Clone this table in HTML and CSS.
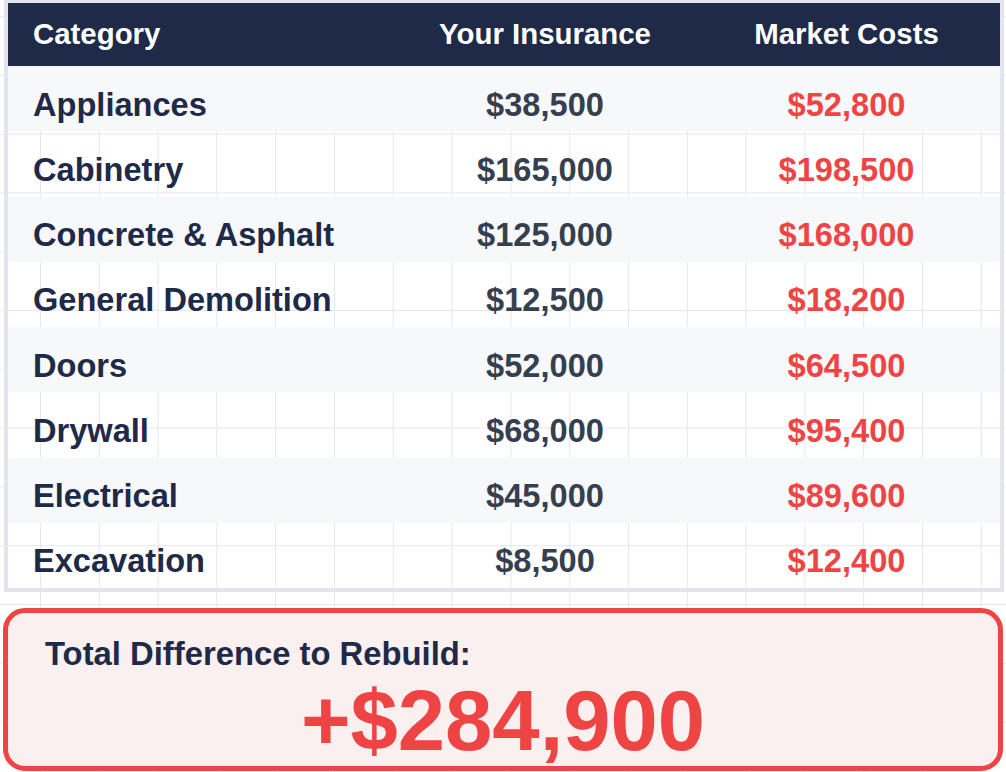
FILE: index.html
```html
<!DOCTYPE html>
<html lang="en">
<head>
<meta charset="utf-8">
<title>Insurance vs Market Costs</title>
<link rel="stylesheet" href="styles.css">
</head>
<body>
  <div class="table">
    <div class="row head">
      <div class="cell cat">Category</div>
      <div class="cell">Your Insurance</div>
      <div class="cell">Market Costs</div>
    </div>
    <div class="row shaded">
      <div class="cell cat">Appliances</div>
      <div class="cell ins">$38,500</div>
      <div class="cell mkt">$52,800</div>
    </div>
    <div class="row">
      <div class="cell cat">Cabinetry</div>
      <div class="cell ins">$165,000</div>
      <div class="cell mkt">$198,500</div>
    </div>
    <div class="row shaded">
      <div class="cell cat">Concrete &amp; Asphalt</div>
      <div class="cell ins">$125,000</div>
      <div class="cell mkt">$168,000</div>
    </div>
    <div class="row">
      <div class="cell cat">General Demolition</div>
      <div class="cell ins">$12,500</div>
      <div class="cell mkt">$18,200</div>
    </div>
    <div class="row shaded">
      <div class="cell cat">Doors</div>
      <div class="cell ins">$52,000</div>
      <div class="cell mkt">$64,500</div>
    </div>
    <div class="row">
      <div class="cell cat">Drywall</div>
      <div class="cell ins">$68,000</div>
      <div class="cell mkt">$95,400</div>
    </div>
    <div class="row shaded">
      <div class="cell cat">Electrical</div>
      <div class="cell ins">$45,000</div>
      <div class="cell mkt">$89,600</div>
    </div>
    <div class="row">
      <div class="cell cat">Excavation</div>
      <div class="cell ins">$8,500</div>
      <div class="cell mkt">$12,400</div>
    </div>
  </div>

  <div class="total">
    <div class="total-label">Total Difference to Rebuild:</div>
    <div class="total-value">+$284,900</div>
  </div>
</body>
</html>
```

FILE: styles.css
```css
html, body {
  margin: 0;
  padding: 0;
}

body {
  width: 1006px;
  min-height: 772px;
  overflow: hidden;
  font-family: "Liberation Sans", Arial, sans-serif;
  font-weight: 700;
  background-color: #ffffff;
  background-image:
    linear-gradient(to right, #e6e7ed 1px, transparent 1px),
    linear-gradient(to bottom, #e6e7ed 1px, transparent 1px);
  background-size: 58.8px 58.8px;
  background-position: 40px 16px;
}

.table {
  box-sizing: border-box;
  width: 1000px;
  margin-left: 4px;
  border: 4px solid #e4e5ec;
  border-top-width: 3px;
}

.row {
  box-sizing: border-box;
  display: grid;
  grid-template-columns: 389px 296px 1fr;
  align-items: center;
  height: 65.25px;
  padding-top: 12px;
  font-size: 32.6px;
}

.row.shaded {
  background: #f7f8fa;
}

.row.head {
  height: 63px;
  padding-top: 0;
  padding-bottom: 2px;
  background: #1e2a47;
  color: #ffffff;
  font-size: 29.4px;
}

.cell {
  text-align: center;
  white-space: nowrap;
}

.cell.cat {
  text-align: left;
  padding-left: 25px;
  color: #1e2a47;
}

.row.head .cell.cat {
  color: #ffffff;
}

.cell.ins {
  color: #353f4f;
}

.cell.mkt {
  color: #ef4444;
}

.total {
  box-sizing: border-box;
  width: 1000px;
  height: 163px;
  margin: 16px 0 0 3px;
  padding: 22px 0 0 37px;
  border: 5px solid #ef4444;
  border-radius: 22px;
  background: #fbf0f0;
}

.total-label {
  font-size: 32.8px;
  color: #1e2a47;
}

.total-value {
  margin-top: 5px;
  margin-left: -37px;
  font-size: 85px;
  line-height: 1;
  text-align: center;
  color: #ef4444;
}
```
